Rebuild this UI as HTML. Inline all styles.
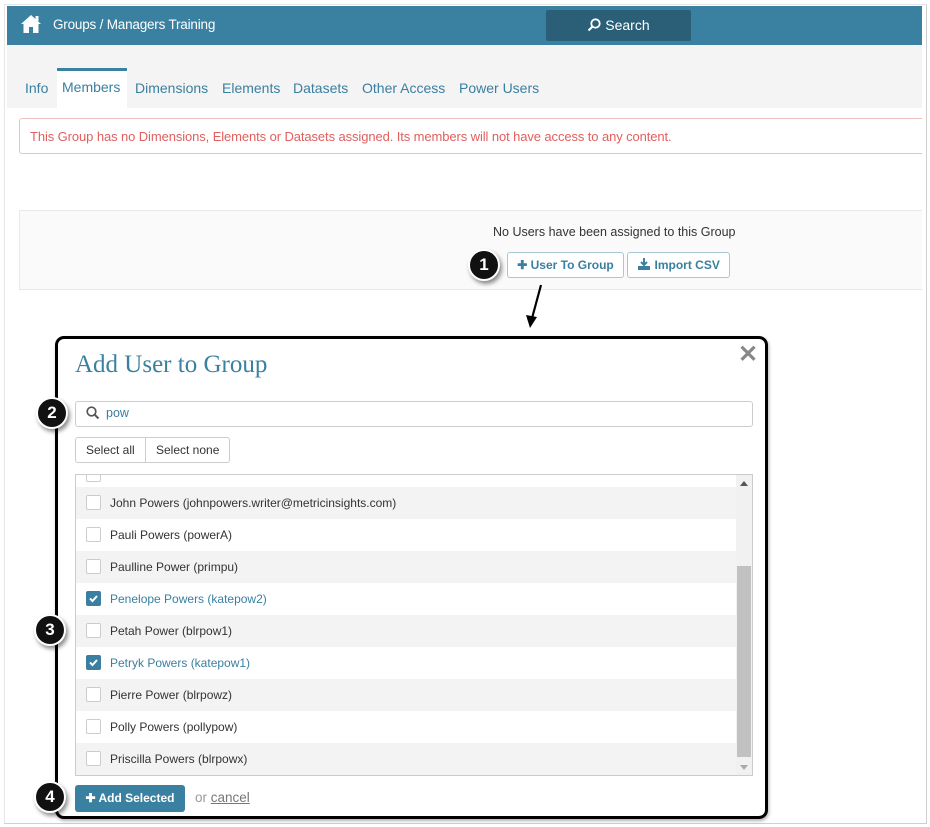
<!DOCTYPE html>
<html><head><meta charset="utf-8"><style>
*{box-sizing:border-box;margin:0;padding:0}
body{width:930px;height:827px;background:#fff;font-family:"Liberation Sans",Arial,sans-serif;position:relative;overflow:hidden}
.abs{position:absolute}
.frame{left:4px;top:4px;width:923px;height:820px;border:1px solid #cfcfcf;border-top-color:#e6e6e6;border-left-color:#e6e6e6}
.hdr{left:7px;top:6px;width:915px;height:39px;background:#3a80a0}
.hdr .t{position:absolute;left:46px;top:11px;color:#fff;font-size:13.5px;letter-spacing:-0.2px}
.srch{left:546px;top:10px;width:145px;height:31px;background:#2b5f78;border-radius:2px;color:#fff;font-size:14px;text-align:center;line-height:31px}
.tabs{left:7px;top:45px;width:915px;height:63px;background:#f4f4f4}
.tab{position:absolute;top:80px;font-size:14px;color:#3a7fa0}
.active{left:57px;top:68px;width:70px;height:40px;background:#fff;border-top:3px solid #3a80a0}
.alert{left:19px;top:118px;width:903px;height:36px;border:1px solid #f0c0c0;border-right:none;border-radius:3px 0 0 3px;color:#e0605f;font-size:13px;padding:10px 10px;letter-spacing:-0.1px}
.panel{left:19px;top:210px;width:903px;height:80px;background:#fafafa;border:1px solid #e9e9e9;border-right:none}
.btn{height:26px;border:1px solid #a9c7d6;border-radius:3px;background:#fff;color:#3a7fa0;font-size:12px;font-weight:bold;line-height:24px;text-align:center}
.num{width:32px;height:32px;border-radius:50%;background:#111;border:2px solid #fff;box-shadow:2px 3px 4px rgba(0,0,0,.45);color:#fff;font-weight:bold;font-size:17px;text-align:center;line-height:28px}
.modal{left:55px;top:336px;width:713px;height:483px;border:3px solid #000;border-radius:9px;background:#fff;box-shadow:1px 2px 3px rgba(0,0,0,.3)}
.row{position:absolute;left:76px;width:660px;height:32px;font-size:12px;color:#333;line-height:32px;padding-left:34px}
.row.g{background:#f3f3f3}
.row .cb{position:absolute;left:10px;top:8px;width:15px;height:15px;border:1px solid #ccc;border-radius:2px;background:#fff}
.row.c{color:#3a7fa0}
.row.c .cb{background:#3a7fa0;border-color:#3a7fa0}
</style></head><body>
<div class="abs frame"></div>
<div class="abs hdr">
<svg style="position:absolute;left:13px;top:8px" width="22" height="20" viewBox="0 0 22 20"><path d="M11 1 L1 10 L3.5 10 L3.5 19 L9 19 L9 13 L13 13 L13 19 L18.5 19 L18.5 10 L21 10 Z" fill="#fff"/><rect x="15.5" y="2" width="3" height="5" fill="#fff"/></svg>
<div class="t">Groups / Managers Training</div></div>
<div class="abs srch"><svg width="14" height="14" viewBox="0 0 14 14" style="vertical-align:-2px"><circle cx="8.5" cy="5.5" r="4.2" stroke="#fff" stroke-width="1.8" fill="none"/><path d="M5.5 8.5 L1.5 12.5" stroke="#fff" stroke-width="2"/></svg> Search</div>
<div class="abs tabs"></div>
<div class="abs active"></div>
<div class="tab" style="left:25px">Info</div>
<div class="tab" style="left:62px;top:79px">Members</div>
<div class="tab" style="left:135px">Dimensions</div>
<div class="tab" style="left:222px">Elements</div>
<div class="tab" style="left:293px">Datasets</div>
<div class="tab" style="left:362px">Other Access</div>
<div class="tab" style="left:459px">Power Users</div>
<div class="abs alert">This Group has no Dimensions, Elements or Datasets assigned. Its members will not have access to any content.</div>
<div class="abs panel"></div>
<div class="abs" style="left:493px;top:225px;font-size:12.5px;color:#333">No Users have been assigned to this Group</div>
<div class="abs btn" style="left:507px;top:252px;width:117px">✚ User To Group</div>
<div class="abs btn" style="left:627px;top:252px;width:103px"><svg width="14" height="12" viewBox="0 0 14 12" style="vertical-align:-1px"><path d="M7 0v6M4 4l3 3 3-3" stroke="#3a7fa0" stroke-width="2" fill="none"/><rect x="1" y="8" width="12" height="4" fill="#3a7fa0"/></svg> Import CSV</div>
<div class="abs num" style="left:468px;top:249px">1</div>
<svg class="abs" style="left:520px;top:282px" width="30" height="50"><path d="M21 3 L11 40" stroke="#000" stroke-width="2.2"/><path d="M6 33 L10 46 L17 35 Z" fill="#000"/></svg>
<div class="abs modal"></div>
<div class="abs" style="left:75px;top:351px;font-family:'Liberation Serif',serif;font-size:25px;color:#3a80a0">Add User to Group</div>
<div class="abs" style="left:738px;top:340px;font-size:24px;color:#888;font-weight:bold">✕</div>
<div class="abs" style="left:75px;top:401px;width:678px;height:26px;border:1px solid #ccc;border-radius:3px"></div>
<svg class="abs" style="left:86px;top:406px" width="14" height="14" viewBox="0 0 14 14"><circle cx="5.5" cy="5.5" r="4.3" stroke="#555" stroke-width="1.7" fill="none"/><path d="M8.7 8.7L12.5 12.5" stroke="#555" stroke-width="2"/></svg>
<div class="abs" style="left:106px;top:406px;font-size:12.5px;color:#3a7fa0">pow</div>
<div class="abs num" style="left:36px;top:397px">2</div>
<div class="abs" style="left:75px;top:437px;width:155px;height:26px;border:1px solid #ccc;border-radius:3px;font-size:12px;color:#333;line-height:24px"><span style="position:absolute;left:10px">Select all</span><span style="position:absolute;left:69px;top:0;height:24px;border-left:1px solid #ccc"></span><span style="position:absolute;left:80px">Select none</span></div>
<div class="abs" style="left:75px;top:474px;width:678px;height:302px;border:1px solid #ccc"></div>
<div class="row" style="top:475px;height:12px;overflow:hidden"><span class="cb" style="top:-8px"></span></div>
<div class="row g" style="top:487px"><span class="cb"></span>John Powers (johnpowers.writer@metricinsights.com)</div>
<div class="row" style="top:519px"><span class="cb"></span>Pauli Powers (powerA)</div>
<div class="row g" style="top:551px"><span class="cb"></span>Paulline Power (primpu)</div>
<div class="row c" style="top:583px"><span class="cb"><svg width="13" height="13" viewBox="0 0 13 13" style="position:absolute;left:0;top:0"><path d="M3 6.5l2.5 2.5 4.5-5" stroke="#fff" stroke-width="2" fill="none"/></svg></span>Penelope Powers (katepow2)</div>
<div class="row g" style="top:615px"><span class="cb"></span>Petah Power (blrpow1)</div>
<div class="row c" style="top:647px"><span class="cb"><svg width="13" height="13" viewBox="0 0 13 13" style="position:absolute;left:0;top:0"><path d="M3 6.5l2.5 2.5 4.5-5" stroke="#fff" stroke-width="2" fill="none"/></svg></span>Petryk Powers (katepow1)</div>
<div class="row g" style="top:679px"><span class="cb"></span>Pierre Power (blrpowz)</div>
<div class="row" style="top:711px"><span class="cb"></span>Polly Powers (pollypow)</div>
<div class="row g" style="top:743px"><span class="cb"></span>Priscilla Powers (blrpowx)</div>
<div class="abs" style="left:736px;top:475px;width:16px;height:300px;background:#f1f1f1"></div>
<div class="abs" style="left:737px;top:566px;width:14px;height:191px;background:#c1c1c1"></div>
<div class="abs" style="left:740px;top:481px;width:0;height:0;border:4px solid transparent;border-bottom:5px solid #555;border-top:none"></div>
<div class="abs" style="left:740px;top:765px;width:0;height:0;border:4px solid transparent;border-top:5px solid #aaa;border-bottom:none"></div>
<div class="abs num" style="left:34px;top:614px">3</div>
<div class="abs" style="left:75px;top:785px;width:110px;height:27px;background:#3a80a0;border-radius:3px;color:#fff;font-size:12px;font-weight:bold;line-height:27px;text-align:center">✚ Add Selected</div>
<div class="abs" style="left:195px;top:790px;font-size:13.5px;color:#999">or <span style="color:#777;text-decoration:underline">cancel</span></div>
<div class="abs num" style="left:34px;top:781px">4</div>
</body></html>
